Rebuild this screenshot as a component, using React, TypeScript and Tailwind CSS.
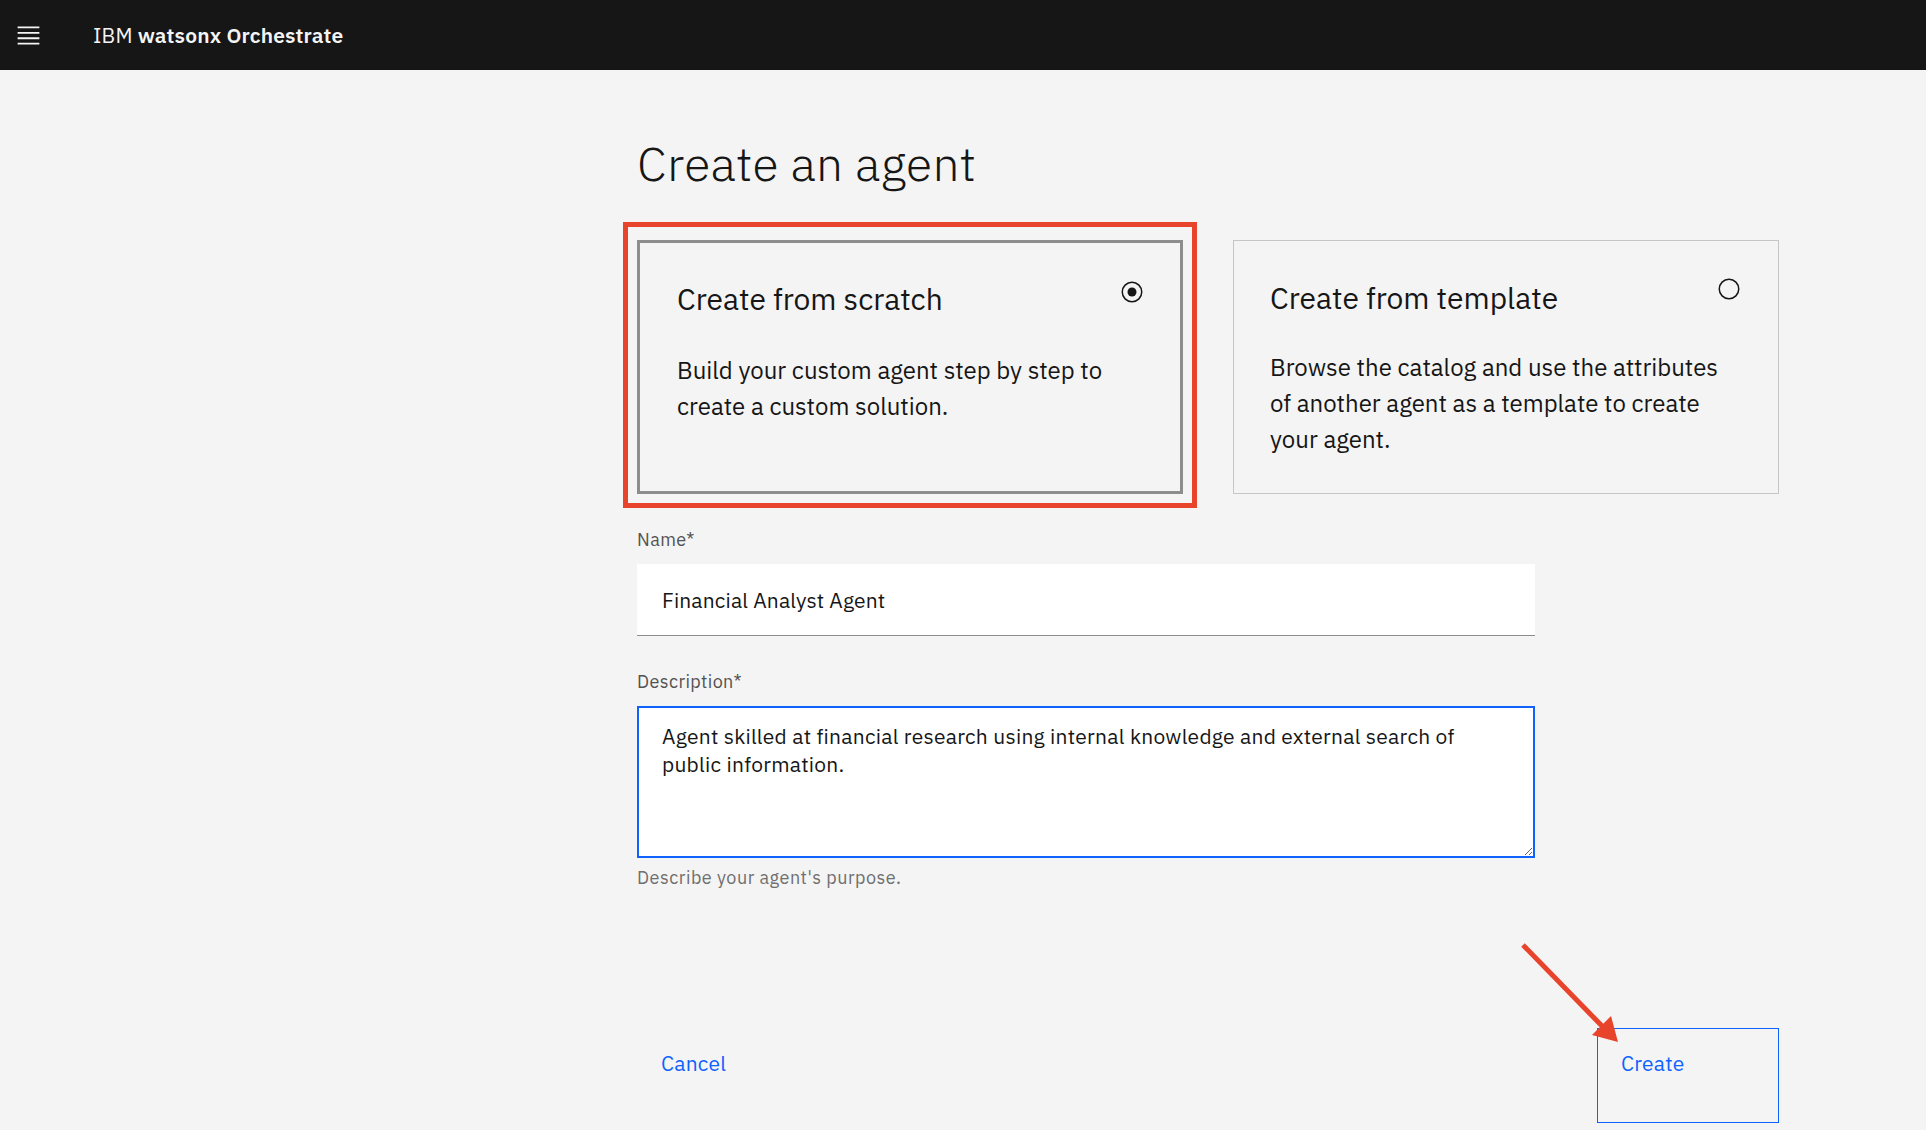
import React from "react";

const font = { fontFamily: '"IBM Plex Sans", Roboto, "Noto Sans", Arial, sans-serif' };

function Radio({ checked }: { checked: boolean }) {
  return (
    <svg width="22" height="22" viewBox="0 0 22 22" className="shrink-0">
      <circle cx="11" cy="11" r="9.75" fill="none" stroke="#161616" strokeWidth="1.5" />
      {checked && <circle cx="11" cy="11" r="4.5" fill="#161616" />}
    </svg>
  );
}

export default function App() {
  return (
    <div className="relative w-[1926px] h-[1130px] overflow-hidden bg-[#f4f4f4] text-[#161616]" style={font}>
      {/* Header */}
      <header className="flex h-[70px] items-center bg-[#161616] pl-[14px]">
        <svg width="29" height="29" viewBox="0 0 32 32" fill="#f4f4f4">
          <path d="M4 6h24v2H4zm0 18h24v2H4zm0-6h24v2H4zm0-6h24v2H4z" />
        </svg>
        <div className="ml-[50px] text-[21px] leading-[28px] tracking-[0.15px] text-[#f4f4f4]">
          IBM <span className="font-semibold">watsonx Orchestrate</span>
        </div>
      </header>

      <main className="ml-[637px] w-[1142px]">
        <h1 className="mt-[63px] text-[48px] font-light leading-[60px] tracking-[0.3px]">Create an agent</h1>

        {/* Option tiles */}
        <div className="mt-[47px] flex gap-[50px]">
          <div className="relative flex h-[254px] w-[546px] items-start justify-between border-[3px] border-[#8d8d8d] pl-[37px] pr-[37px] pt-[36px]">
            <div className="pointer-events-none absolute -left-[17px] -right-[17px] -top-[21px] -bottom-[17px] border-[5px] border-[#e8432b]" />
            <div>
              <div className="text-[30px] leading-[40px]">Create from scratch</div>
              <p className="mt-[33px] text-[24px] leading-[36px]">
                Build your custom agent step by step to
                <br />
                create a custom solution.
              </p>
            </div>
            <div className="pt-[2px]">
              <Radio checked />
            </div>
          </div>
          <div className="flex h-[254px] w-[546px] items-start justify-between border border-[#c6c6c6] pl-[36px] pr-[38px] pt-[37px]">
            <div>
              <div className="text-[30px] leading-[40px]">Create from template</div>
              <p className="mt-[31px] text-[24px] leading-[36px]">
                Browse the catalog and use the attributes
                <br />
                of another agent as a template to create
                <br />
                your agent.
              </p>
            </div>
            <div>
              <Radio checked={false} />
            </div>
          </div>
        </div>

        {/* Form */}
        <div className="w-[898px]">
          <label className="mt-[34px] block text-[18px] leading-[24px] tracking-[0.4px] text-[#525252]">Name*</label>
          <input
            readOnly
            value="Financial Analyst Agent"
            className="mt-[12px] block h-[72px] w-full border-b border-[#8d8d8d] bg-white pl-[25px] text-[21px] tracking-[0.15px] text-[#161616] outline-none"
            style={font}
          />

          <label className="mt-[34px] block text-[18px] leading-[24px] tracking-[0.4px] text-[#525252]">Description*</label>
          <textarea
            readOnly
            value={"Agent skilled at financial research using internal knowledge and external search of\npublic information."}
            className="mt-[12px] block h-[152px] w-full resize-y border-2 border-[#0f62fe] bg-white pl-[23px] pr-[23px] pt-[14px] text-[21px] leading-[28px] tracking-[0.25px] text-[#161616] outline-none"
            style={font}
          />
          <div className="mt-[8px] text-[18px] leading-[24px] tracking-[0.5px] text-[#6f6f6f]">Describe your agent's purpose.</div>
        </div>

        {/* Footer buttons */}
        <div className="mt-[138px] flex justify-between">
          <button className="flex h-[95px] items-start self-start pl-[24px] pt-[21px] text-left text-[21px] leading-[28px] tracking-[0.2px] text-[#0f62fe]" style={font}>
            Cancel
          </button>
          <button className="flex h-[95px] w-[182px] items-start border border-[#0f62fe] pl-[23px] pt-[20px] text-[21px] leading-[28px] tracking-[0.2px] text-[#0f62fe]" style={font}>
            Create
          </button>
        </div>
      </main>

      {/* Annotation arrow */}
      <svg className="pointer-events-none absolute left-0 top-0" width="1926" height="1130">
        <line x1="1523" y1="945" x2="1602" y2="1026" stroke="#e8432b" strokeWidth="5" />
        <polygon points="1618,1042 1592,1035 1611,1016" fill="#e8432b" />
      </svg>
    </div>
  );
}
